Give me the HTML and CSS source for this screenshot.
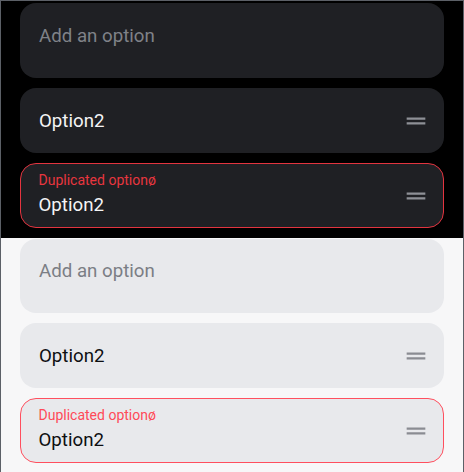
FILE: index.html
```html
<!DOCTYPE html>
<html>
<head>
<meta charset="utf-8">
<link rel="stylesheet" href="styles.css">
</head>
<body>
<div class="frame">
  <section class="section dark">
    <div class="card card-input"><span class="placeholder">Add an option</span></div>
    <div class="card card-row"><span class="value">Option2</span>
      <svg class="handle" viewBox="0 0 24 24" width="28" height="28"><path d="M20 9H4v2h16V9zM4 15h16v-2H4v2z"/></svg>
    </div>
    <div class="card card-row card-error">
      <div class="stack">
        <span class="error-label">Duplicated optionø</span>
        <span class="value">Option2</span>
      </div>
      <svg class="handle" viewBox="0 0 24 24" width="28" height="28"><path d="M20 9H4v2h16V9zM4 15h16v-2H4v2z"/></svg>
    </div>
  </section>
  <section class="section light">
    <div class="card card-input"><span class="placeholder">Add an option</span></div>
    <div class="card card-row"><span class="value">Option2</span>
      <svg class="handle" viewBox="0 0 24 24" width="28" height="28"><path d="M20 9H4v2h16V9zM4 15h16v-2H4v2z"/></svg>
    </div>
    <div class="card card-row card-error">
      <div class="stack">
        <span class="error-label">Duplicated optionø</span>
        <span class="value">Option2</span>
      </div>
      <svg class="handle" viewBox="0 0 24 24" width="28" height="28"><path d="M20 9H4v2h16V9zM4 15h16v-2H4v2z"/></svg>
    </div>
  </section>
</div>
</body>
</html>
```
FILE: styles.css
```css
html, body {
  margin: 0;
  padding: 0;
}
body {
  width: 464px;
  height: 472px;
  overflow: hidden;
  font-family: Roboto, "Noto Sans", sans-serif;
  background: #f7f7f8;
}
.frame {
  box-sizing: border-box;
  width: 464px;
  height: 472px;
  border-top: 1px solid #5c6067;
  border-left: 1px solid #5c6067;
  border-right: 1px solid #5c6067;
  display: flex;
  flex-direction: column;
}
.section {
  display: flex;
  flex-direction: column;
  gap: 10px;
  padding-left: 19px;
  padding-right: 19px;
}
.dark {
  background: #000;
  height: 237px;
  box-sizing: border-box;
  padding-top: 2px;
}
.light {
  background: #f7f7f8;
  flex: 1;
  padding-top: 1px;
}
.card {
  box-sizing: border-box;
  border-radius: 16px;
  padding: 0 14.3px 0 19px;
  flex: none;
}
.dark .card { background: #1f2024; }
.light .card { background: #e8e9ec; }
.card-input {
  height: 75px;
  padding-top: 20.6px;
}
.light .card-input { height: 74px; padding-top: 19.6px; }
.card-row {
  height: 65px;
  display: flex;
  align-items: center;
  justify-content: space-between;
}
.placeholder {
  font-size: 18.7px;
  line-height: 24px;
  display: block;
}
.dark .placeholder { color: #7f8288; }
.light .placeholder { color: #7b7e85; }
.value {
  font-size: 18.7px;
  line-height: 24px;
  display: block;
}
.dark .value { color: #f4f4f5; }
.light .value { color: #0e0f11; }
.handle { display: block; }
.dark .handle { fill: #8e9096; }
.light .handle { fill: #8a8c92; }
.stack {
  align-self: flex-start;
  display: flex;
  flex-direction: column;
  padding-top: 7.7px;
}
.error-label {
  font-size: 14px;
  line-height: 16px;
  margin-bottom: 5px;
}
.dark .card-error { border: 1.5px solid #e3343f; padding-left: 17.5px; padding-right: 12.8px; }
.light .card-error { border: 1.5px solid #ff4f5e; padding-left: 17.5px; padding-right: 12.8px; }
.dark .error-label { color: #e8363f; }
.light .error-label { color: #ff4a58; }
```
